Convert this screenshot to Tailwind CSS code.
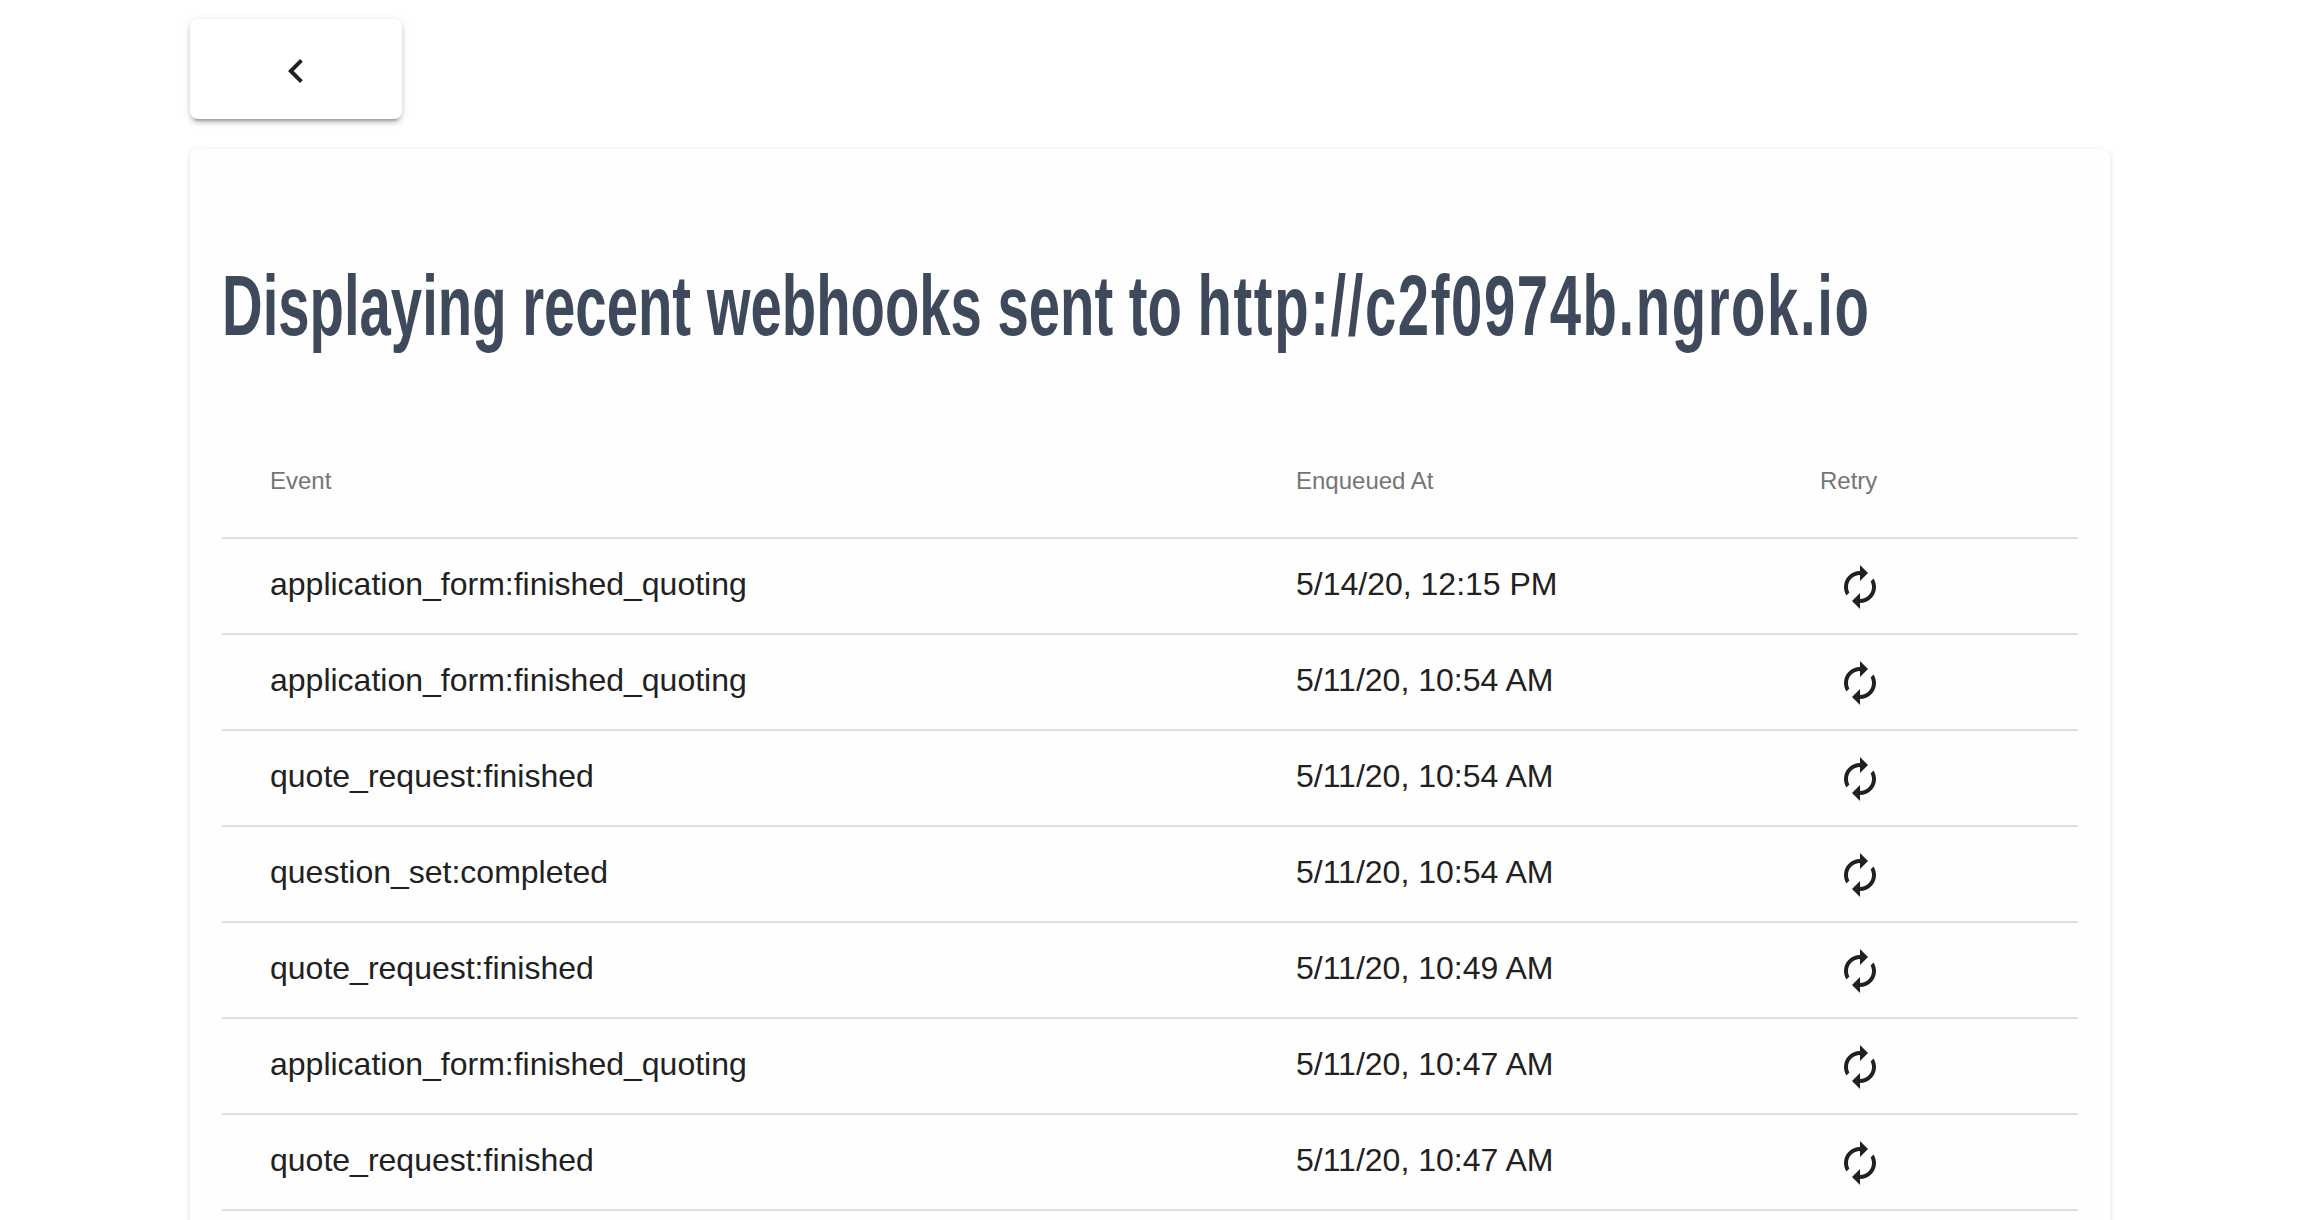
<!doctype html>
<html>
<head>
<meta charset="utf-8">
<script src="https://cdn.jsdelivr.net/npm/@tailwindcss/browser@4"></script>
</head>
<body class="h-screen overflow-hidden bg-white font-['Liberation_Sans',sans-serif]">
<main class="w-[1920px] ml-[190px] pt-[19px]">
  <button class="flex h-[100px] w-[212px] items-center justify-center rounded-[8px] bg-white shadow-[0_6px_2px_-4px_rgba(0,0,0,0.2),0_4px_4px_0_rgba(0,0,0,0.14),0_2px_10px_0_rgba(0,0,0,0.12)]">
    <svg class="h-12 w-12 fill-[#212121] mt-[4px]" viewBox="0 0 24 24"><path d="M15.41 7.41L14 6l-6 6 6 6 1.41-1.41L10.83 12z"/></svg>
  </button>
  <section class="mt-[30px] rounded-[8px] bg-[#fefefe] px-[32px] pb-[64px] shadow-[0_2px_6px_0_rgba(0,0,0,0.14)]">
    <h1 class="overflow-hidden pt-[102px] pb-[62px] text-[85px] leading-[110px] font-bold whitespace-nowrap text-[#3e4a5c]"><span class="inline-block origin-left scale-x-[0.662]">Displaying recent webhooks sent to <span class="tracking-[2.4px]">http://c2f0974b.ngrok.io</span></span></h1>
    <table class="w-full table-fixed border-collapse text-left">
      <colgroup><col class="w-[1026px]"><col class="w-[524px]"><col></colgroup>
      <thead>
        <tr class="h-[115px] border-b-2 border-[#e0e0e0] text-[24px] text-[#757575]">
          <th class="pl-[48px] pt-[1px] font-normal">Event</th>
          <th class="pl-[48px] pt-[1px] font-normal">Enqueued At</th>
          <th class="pl-[48px] pt-[1px] font-normal">Retry</th>
        </tr>
      </thead>
      <tbody class="text-[32px] text-[#212121]">
        <tr class="h-[96px] border-b-2 border-[#e0e0e0]">
          <td class="pl-[48px] pb-[4px]">application_form:finished_quoting</td>
          <td class="pl-[48px] pb-[4px]">5/14/20, 12:15 PM</td>
          <td class="pl-[64px] pt-[2px]"><svg class="h-12 w-12 fill-[#212121]" viewBox="0 0 24 24"><path d="M12 6v3l4-4-4-4v3c-4.42 0-8 3.58-8 8 0 1.57.46 3.03 1.24 4.26L6.7 14.8c-.45-.83-.7-1.79-.7-2.8 0-3.31 2.69-6 6-6zm6.76 1.74L17.3 9.2c.44.84.7 1.79.7 2.8 0 3.31-2.69 6-6 6v-3l-4 4 4 4v-3c4.42 0 8-3.58 8-8 0-1.57-.46-3.03-1.24-4.26z"/></svg></td>
        </tr>
        <tr class="h-[96px] border-b-2 border-[#e0e0e0]">
          <td class="pl-[48px] pb-[4px]">application_form:finished_quoting</td>
          <td class="pl-[48px] pb-[4px]">5/11/20, 10:54 AM</td>
          <td class="pl-[64px] pt-[2px]"><svg class="h-12 w-12 fill-[#212121]" viewBox="0 0 24 24"><path d="M12 6v3l4-4-4-4v3c-4.42 0-8 3.58-8 8 0 1.57.46 3.03 1.24 4.26L6.7 14.8c-.45-.83-.7-1.79-.7-2.8 0-3.31 2.69-6 6-6zm6.76 1.74L17.3 9.2c.44.84.7 1.79.7 2.8 0 3.31-2.69 6-6 6v-3l-4 4 4 4v-3c4.42 0 8-3.58 8-8 0-1.57-.46-3.03-1.24-4.26z"/></svg></td>
        </tr>
        <tr class="h-[96px] border-b-2 border-[#e0e0e0]">
          <td class="pl-[48px] pb-[4px]">quote_request:finished</td>
          <td class="pl-[48px] pb-[4px]">5/11/20, 10:54 AM</td>
          <td class="pl-[64px] pt-[2px]"><svg class="h-12 w-12 fill-[#212121]" viewBox="0 0 24 24"><path d="M12 6v3l4-4-4-4v3c-4.42 0-8 3.58-8 8 0 1.57.46 3.03 1.24 4.26L6.7 14.8c-.45-.83-.7-1.79-.7-2.8 0-3.31 2.69-6 6-6zm6.76 1.74L17.3 9.2c.44.84.7 1.79.7 2.8 0 3.31-2.69 6-6 6v-3l-4 4 4 4v-3c4.42 0 8-3.58 8-8 0-1.57-.46-3.03-1.24-4.26z"/></svg></td>
        </tr>
        <tr class="h-[96px] border-b-2 border-[#e0e0e0]">
          <td class="pl-[48px] pb-[4px]">question_set:completed</td>
          <td class="pl-[48px] pb-[4px]">5/11/20, 10:54 AM</td>
          <td class="pl-[64px] pt-[2px]"><svg class="h-12 w-12 fill-[#212121]" viewBox="0 0 24 24"><path d="M12 6v3l4-4-4-4v3c-4.42 0-8 3.58-8 8 0 1.57.46 3.03 1.24 4.26L6.7 14.8c-.45-.83-.7-1.79-.7-2.8 0-3.31 2.69-6 6-6zm6.76 1.74L17.3 9.2c.44.84.7 1.79.7 2.8 0 3.31-2.69 6-6 6v-3l-4 4 4 4v-3c4.42 0 8-3.58 8-8 0-1.57-.46-3.03-1.24-4.26z"/></svg></td>
        </tr>
        <tr class="h-[96px] border-b-2 border-[#e0e0e0]">
          <td class="pl-[48px] pb-[4px]">quote_request:finished</td>
          <td class="pl-[48px] pb-[4px]">5/11/20, 10:49 AM</td>
          <td class="pl-[64px] pt-[2px]"><svg class="h-12 w-12 fill-[#212121]" viewBox="0 0 24 24"><path d="M12 6v3l4-4-4-4v3c-4.42 0-8 3.58-8 8 0 1.57.46 3.03 1.24 4.26L6.7 14.8c-.45-.83-.7-1.79-.7-2.8 0-3.31 2.69-6 6-6zm6.76 1.74L17.3 9.2c.44.84.7 1.79.7 2.8 0 3.31-2.69 6-6 6v-3l-4 4 4 4v-3c4.42 0 8-3.58 8-8 0-1.57-.46-3.03-1.24-4.26z"/></svg></td>
        </tr>
        <tr class="h-[96px] border-b-2 border-[#e0e0e0]">
          <td class="pl-[48px] pb-[4px]">application_form:finished_quoting</td>
          <td class="pl-[48px] pb-[4px]">5/11/20, 10:47 AM</td>
          <td class="pl-[64px] pt-[2px]"><svg class="h-12 w-12 fill-[#212121]" viewBox="0 0 24 24"><path d="M12 6v3l4-4-4-4v3c-4.42 0-8 3.58-8 8 0 1.57.46 3.03 1.24 4.26L6.7 14.8c-.45-.83-.7-1.79-.7-2.8 0-3.31 2.69-6 6-6zm6.76 1.74L17.3 9.2c.44.84.7 1.79.7 2.8 0 3.31-2.69 6-6 6v-3l-4 4 4 4v-3c4.42 0 8-3.58 8-8 0-1.57-.46-3.03-1.24-4.26z"/></svg></td>
        </tr>
        <tr class="h-[96px] border-b-2 border-[#e0e0e0]">
          <td class="pl-[48px] pb-[4px]">quote_request:finished</td>
          <td class="pl-[48px] pb-[4px]">5/11/20, 10:47 AM</td>
          <td class="pl-[64px] pt-[2px]"><svg class="h-12 w-12 fill-[#212121]" viewBox="0 0 24 24"><path d="M12 6v3l4-4-4-4v3c-4.42 0-8 3.58-8 8 0 1.57.46 3.03 1.24 4.26L6.7 14.8c-.45-.83-.7-1.79-.7-2.8 0-3.31 2.69-6 6-6zm6.76 1.74L17.3 9.2c.44.84.7 1.79.7 2.8 0 3.31-2.69 6-6 6v-3l-4 4 4 4v-3c4.42 0 8-3.58 8-8 0-1.57-.46-3.03-1.24-4.26z"/></svg></td>
        </tr>
      </tbody>
    </table>
  </section>
</main>
</body>
</html>
